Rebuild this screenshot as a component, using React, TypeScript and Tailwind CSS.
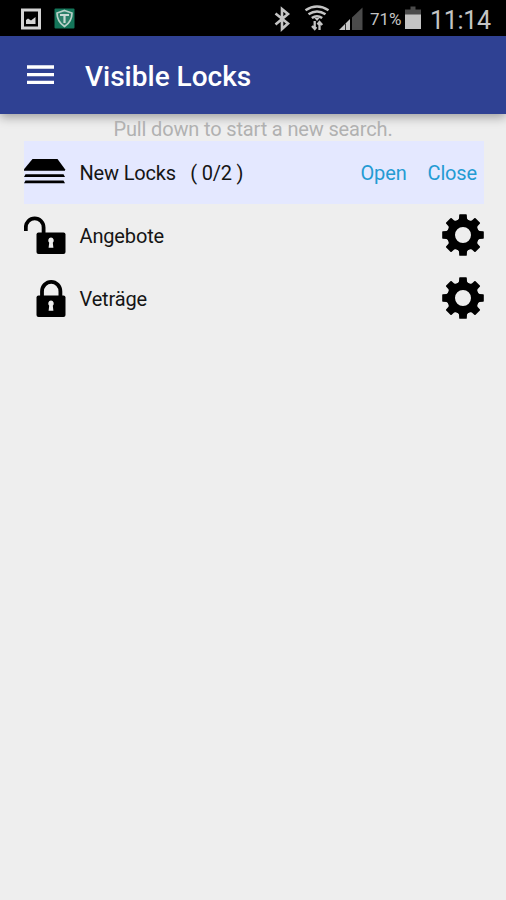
import React from "react";

const StatusBar = () => {
  return (
    <div className="flex h-9 w-full items-center bg-black pl-5 pr-[15px] pt-px">
      <svg className="h-9 w-[58px]" viewBox="0 0 58 36">
        <rect x="2.5" y="9" width="17" height="18" fill="none" stroke="#d4d4d4" strokeWidth="3" />
        <path d="M6 23v-4l2-1.500 3 2 4.500-3.500v7z" fill="#d4d4d4" />
        <rect x="34.500" y="7.500" width="20" height="20" rx="1" fill="#14765a" />
        <path
          d="M44.500 9.500l7.500 2.500c0 6-2 10-7.500 13.500C39 22 37 18 37 12z"
          fill="#2d8069"
          stroke="#b9d0c8"
          strokeWidth="1.700"
        />
        <path d="M40 14h9M44.500 14v8" stroke="#c9dad4" strokeWidth="2.200" fill="none" />
      </svg>
      <div className="flex flex-1 items-center justify-end">
        <svg className="h-9 w-[91px]" viewBox="273 0 91 36">
          <path
            d="M275.500 12.500l12.500 10-6 5.500V8l6 5-12.500 10.500"
            fill="none"
            stroke="#c4c4c4"
            strokeWidth="2.600"
          />
          <path
            d="M305.500 9.200q11.500-7.400 23 0M308.500 13.300q8.500-5.800 17 0M311.800 17q5.200-3.600 10.400 0"
            fill="none"
            stroke="#c4c4c4"
            strokeWidth="2.500"
          />
          <path d="M314.500 17h5l-2.500 3z" fill="#c4c4c4" />
          <path
            d="M314.700 20v8M312 25l2.700 3 1.600-2M319.500 29v-8M317.500 23.500l2-2.500 2.700 3"
            fill="none"
            stroke="#c4c4c4"
            strokeWidth="2.300"
          />
          <path d="M339 29l11-11v11z" fill="#c8c8c8" />
          <path d="M352 29V16.500L362.500 6.500V29z" fill="#4b4b4b" />
          <path d="M345.500 29v-6.500" stroke="#333" strokeWidth="1" />
        </svg>
        <span className="ml-[6px] w-[35px] whitespace-nowrap pt-[3px] text-[17px] text-[#c4c4c4]">71%</span>
        <svg className="h-9 w-4" viewBox="0 0 16 36">
          <path d="M5.500 5.500h5v3H16V14H0V8.500h5.500z" fill="#4b4b4b" />
          <path d="M0 13.500h16V28H0z" fill="#c4c4c4" />
        </svg>
        <span className="ml-[9px] w-[61px] whitespace-nowrap pt-[4px] text-[25px] leading-9 tracking-[-0.3px] text-[#c4c4c4]">
          11:14
        </span>
      </div>
    </div>
  );
};

const Gear = () => {
  return (
    <svg className="h-[42px] w-[42px]" viewBox="-21 -21 42 42">
      <circle r="12" fill="none" stroke="#000" strokeWidth="8" />
      {[0, 45, 90, 135, 180, 225, 270, 315].map((angle) => (
        <path
          key={angle}
          d="M-6-13.500L-4-16.500-3.800-20.200Q-3.700-20.800-3-20.800H3Q3.700-20.800 3.800-20.200L4-16.500 6-13.500z"
          transform={`rotate(${angle})`}
        />
      ))}
    </svg>
  );
};

const Padlock = ({ open }: { open: boolean }) => {
  return (
    <svg className="h-[42px] w-[42px]" viewBox="0 0 42 42">
      {open ? (
        <path d="M1.800 17v-3.500a8.900 9.200 0 0 1 17.800 0v6.500" fill="none" stroke="#000" strokeWidth="3.800" />
      ) : (
        <path d="M18 20v-5.500a9.200 9.700 0 0 1 18.400 0V20" fill="none" stroke="#000" strokeWidth="3.800" />
      )}
      <rect x="12.500" y="18.500" width="29" height="21.500" rx="2" />
      <path d="M27 23.500a3 3 0 0 1 1.800 5.200l.6 5h-4.800l.6-5A3 3 0 0 1 27 23.500z" fill="#eee" />
    </svg>
  );
};

const LockRow = ({ name, open }: { name: string; open: boolean }) => {
  return (
    <div className="flex h-[63px] items-center">
      <Padlock open={open} />
      <p className="ml-[14px] flex-1 pt-[2px] text-[20px] tracking-[-0.15px] text-[#151515]">{name}</p>
      <button aria-label="Settings">
        <Gear />
      </button>
    </div>
  );
};

const App = () => {
  return (
    <div className="flex min-h-[900px] w-full flex-col bg-[#eeeeee] font-[Roboto,sans-serif]">
      <StatusBar />
      <header className="flex h-[78px] items-center bg-[#2f4193] pl-[26.500px] shadow-[0_3px_10px_rgba(0,0,0,0.35)]">
        <svg className="h-5 w-[27px]" viewBox="0 0 27 20">
          <path d="M0 2h27M0 9.700h27M0 17.400h27" stroke="#fff" strokeWidth="3.300" />
        </svg>
        <h1 className="ml-[31.500px] mt-[3px] text-[28px] font-medium text-white">Visible Locks</h1>
      </header>
      <p className="h-[27px] pt-px text-center text-[20px] leading-7 tracking-[-0.150px] text-[#b1b1b1]">
        Pull down to start a new search.
      </p>
      <main className="pl-[23.500px] pr-[22px]">
        <div className="flex h-[62.500px] items-center bg-[#e4e8ff]">
          <svg className="h-[42px] w-[42px]" viewBox="0 0 42 42">
            <path d="M8.500 8h25L41 18.200V19.700H0V18.200z" />
            <path d="M1.500 23.200h38l1.500 2.800H0zM1.500 29.400h38l1.500 2.800H0z" />
          </svg>
          <p className="ml-[14px] flex-1 whitespace-pre pt-[2px] text-[20px] tracking-[-0.180px] text-[#151515]">
            New Locks   ( 0/2 )
          </p>
          <button className="pt-[2px] text-[20px] tracking-[-0.150px] text-[#249bd3]">Open</button>
          <button className="ml-[21px] mr-[7px] pt-[2px] text-[20px] tracking-[-0.150px] text-[#249bd3]">Close</button>
        </div>
        <LockRow name="Angebote" open={true} />
        <LockRow name="Veträge" open={false} />
      </main>
    </div>
  );
};

export default App;
